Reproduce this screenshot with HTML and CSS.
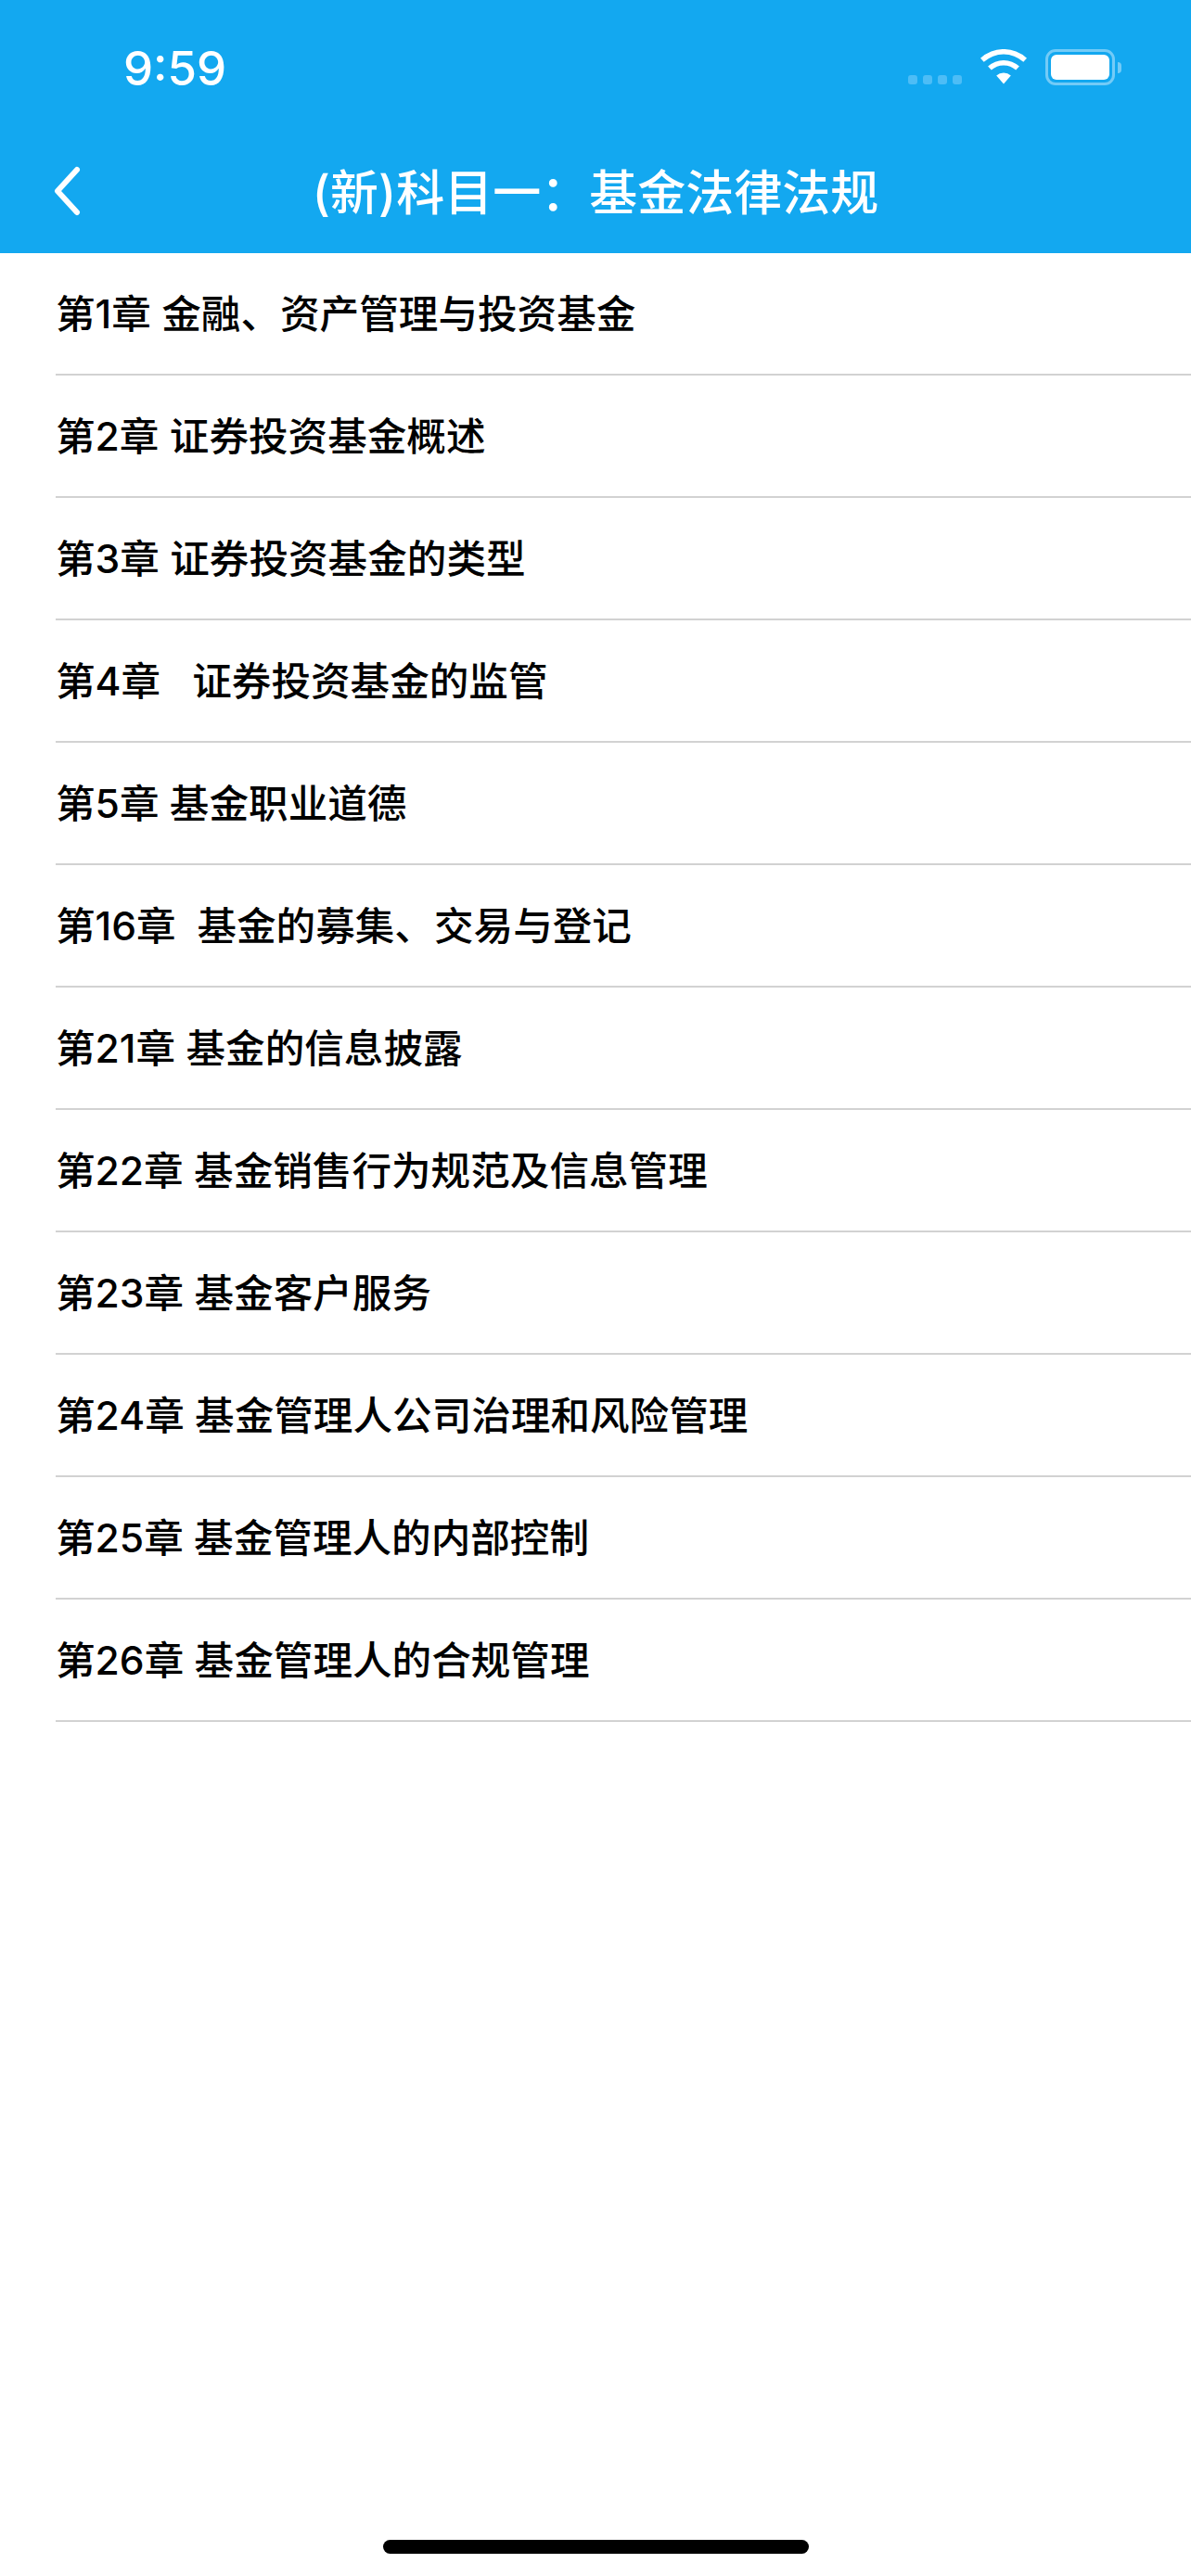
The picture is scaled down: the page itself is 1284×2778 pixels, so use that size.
FILE: index.html
```html
<!DOCTYPE html>
<html lang="zh-CN">
<head>
    <meta charset="UTF-8">
    <meta name="viewport" content="width=device-width, initial-scale=1.0">
    <title>(新)科目一&#xFF1A;基金法律法规</title>
    <link rel="stylesheet" href="styles.css">
</head>
<body>
    <header class="top">
        <div class="status-bar">
            <span class="time">9:59</span>
            <div class="status-icons">
                <div class="signal"><i></i><i></i><i></i><i></i></div>
                <svg class="wifi" width="50" height="39" viewBox="0 0 50 39">
                    <path d="M0 9.7 A37 37 0 0 1 50 9.7 L46.3 13.8 A31.5 31.5 0 0 0 3.7 13.8 Z" fill="#fff"/>
                    <path d="M8.1 18.6 A25 25 0 0 1 41.9 18.6 L38.2 22.6 A19.5 19.5 0 0 0 11.8 22.6 Z" fill="#fff"/>
                    <path d="M17.2 28.5 A11.5 11.5 0 0 1 32.8 28.5 L25 37.5 Z" fill="#fff"/>
                </svg>
                <div class="battery"><div class="battery-level"></div></div>
                <div class="battery-cap"></div>
            </div>
        </div>
        <div class="nav-bar">
            <svg class="back" width="30" height="54" viewBox="0 0 30 54">
                <path d="M26 4 L5 27 L26 50" fill="none" stroke="#fff" stroke-width="6" stroke-linecap="round" stroke-linejoin="round"/>
            </svg>
            <h1 class="title">(新)科目一&#xFF1A;基金法律法规</h1>
        </div>
    </header>

    <ul class="chapters">
        <li>第1章 金融、资产管理与投资基金</li>
        <li>第2章 证券投资基金概述</li>
        <li>第3章 证券投资基金的类型</li>
        <li>第4章&nbsp;&nbsp; 证券投资基金的监管</li>
        <li>第5章 基金职业道德</li>
        <li>第16章&nbsp; 基金的募集、交易与登记</li>
        <li>第21章 基金的信息披露</li>
        <li>第22章 基金销售行为规范及信息管理</li>
        <li>第23章 基金客户服务</li>
        <li>第24章 基金管理人公司治理和风险管理</li>
        <li>第25章 基金管理人的内部控制</li>
        <li>第26章 基金管理人的合规管理</li>
    </ul>

    <div class="home-indicator"></div>
</body>
</html>
```

FILE: styles.css
```css
body {
    margin: 0;
    height: 2778px;
    position: relative;
    overflow: hidden;
    background: #fff;
    font-family: Inter, "Noto Sans CJK SC", sans-serif;
}
.top {
    background: #13a8f0;
    height: 273px;
    color: #fff;
}
.status-bar {
    height: 145px;
    display: flex;
    justify-content: space-between;
    padding: 0 0 0 133px;
    box-sizing: border-box;
}
.time {
    font-size: 51px;
    line-height: 147px;
    font-weight: 500;
}
.status-icons {
    display: flex;
    align-items: flex-start;
    padding: 53px 75px 0 0;
}
.signal {
    display: flex;
    gap: 6px;
    margin: 28px 20px 0 0;
}
.signal i {
    width: 10px;
    height: 10px;
    border-radius: 3px;
    background: #4dbdf6;
}
.wifi {
    margin-right: 20px;
}
.battery {
    width: 75px;
    height: 39px;
    box-sizing: border-box;
    border: 3px solid #73cbf7;
    border-radius: 11px;
    padding: 3px;
}
.battery-level {
    height: 100%;
    background: #fff;
    border-radius: 6px;
}
.battery-cap {
    width: 4px;
    height: 12px;
    margin: 14px 0 0 3px;
    background: #73cbf7;
    border-radius: 0 6px 6px 0;
}
.nav-bar {
    height: 128px;
    display: flex;
    align-items: center;
    justify-content: center;
    position: relative;
}
.back {
    position: absolute;
    left: 57px;
    top: 34px;
}
.title {
    margin: 0;
    font-size: 52px;
    font-weight: 500;
    line-height: 60px;
}
.chapters {
    list-style: none;
    margin: 0;
    padding: 0 0 0 60px;
}
.chapters li {
    height: 132px;
    box-sizing: border-box;
    border-bottom: 2px solid #d2d2d2;
    font-size: 42.6px;
    font-weight: 500;
    line-height: 132px;
    color: #000;
    white-space: pre;
}
.home-indicator {
    position: absolute;
    left: 413px;
    top: 2739px;
    width: 459px;
    height: 15px;
    border-radius: 8px;
    background: #000;
}
```
